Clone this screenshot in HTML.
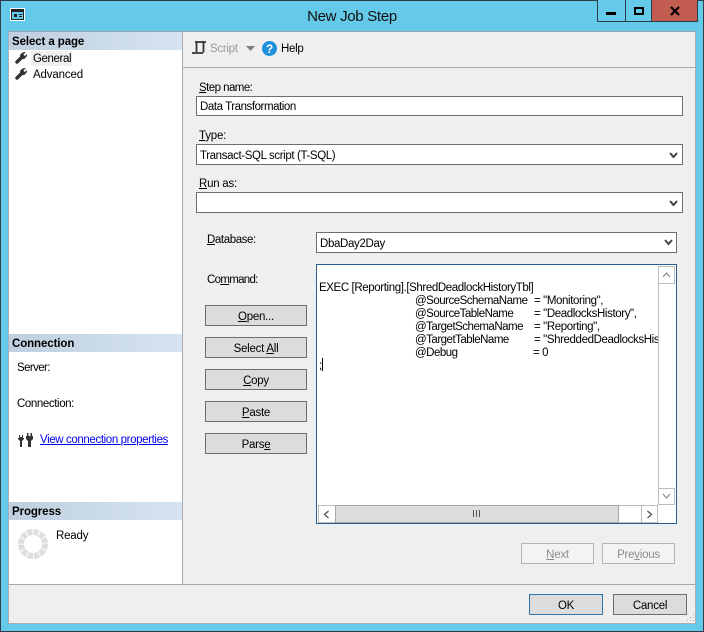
<!DOCTYPE html>
<html><head><meta charset="utf-8"><style>
html,body{margin:0;padding:0;width:704px;height:632px;overflow:hidden;background:#65c9ea}
*{box-sizing:border-box}
body{font-family:"Liberation Sans",sans-serif;font-size:11.5px;color:#000;position:relative}
.a{position:absolute}
.t{position:absolute;white-space:pre;line-height:14px;letter-spacing:-.4px}
.h{position:absolute;left:9px;width:173px;height:18px;background:linear-gradient(90deg,#bfcfdf,#d6e4f1);font-weight:bold;line-height:20px;padding-left:3px;font-size:11.5px;letter-spacing:-.1px}
.i{position:absolute;background:#fff;border:1px solid #6e6e6e;line-height:23px;padding-left:3px;white-space:pre;letter-spacing:-.38px}
.b{position:absolute;left:205px;width:102px;height:21px;background:#dcdcdc;border:1px solid #6e6e6e;text-align:center;line-height:23px;letter-spacing:-.25px}
.s{position:absolute;background:#fff;border:1px solid #bcbcbc}
.c{line-height:13px;letter-spacing:-.39px}
.n{letter-spacing:-.5px}
u{text-decoration-thickness:1px;text-underline-offset:1px}
</style></head><body>
<div class="a" style="left:0;top:0;width:704px;height:632px;border:1px solid #2d3e4a"></div>
<svg class="a" style="left:10px;top:8px" width="16" height="14" viewBox="0 0 16 14"><rect x=".5" y=".5" width="14" height="12" fill="#fff" stroke="#fff"/><rect x="1.500" y="1.500" width="12" height="10" fill="#65c9ea" stroke="#222"/><rect x="2" y="2" width="11" height="2" fill="#222"/><rect x="4" y="6" width="3" height="3" fill="#222"/><rect x="9" y="6" width="3" height="1" fill="#222"/><rect x="9" y="8" width="3" height="1" fill="#222"/></svg>
<div class="t" style="left:0;width:704px;top:8px;text-align:center;font-size:15px;line-height:18px;color:#111;letter-spacing:-.3px">New Job Step</div>
<div class="a" style="left:597px;top:0;width:29px;height:22px;border:1px solid #2d3e4a;border-top:0;background:#65c9ea"></div>
<div class="a" style="left:625px;top:0;width:27px;height:22px;border:1px solid #2d3e4a;border-top:0;background:#65c9ea"></div>
<div class="a" style="left:651px;top:0;width:47px;height:22px;border:1px solid #2d3e4a;border-top:0;background:#c25b50"></div>
<div class="a" style="left:606px;top:12px;width:10px;height:3px;background:#000"></div>
<div class="a" style="left:634px;top:7px;width:10px;height:8px;border:2px solid #000"></div>
<svg class="a" style="left:670px;top:6px" width="10" height="10" viewBox="0 0 10 10"><path d="M1 1L9 9M9 1L1 9" stroke="#000" stroke-width="2.200"/></svg>

<div class="a" style="left:8px;top:31px;width:688px;height:593px;background:#efefef;border:1px solid #a8b0b6;border-top:1px solid #8fa6b2"></div>
<div class="a" style="left:9px;top:32px;width:173px;height:552px;background:#fff"></div>
<div class="a" style="left:182px;top:32px;width:1px;height:552px;background:#a9a9a9"></div>
<div class="a" style="left:183px;top:67px;width:512px;height:1px;background:#a9a9a9"></div>
<div class="a" style="left:9px;top:584px;width:686px;height:1px;background:#a9a9a9"></div>
<div class="a" style="left:695px;top:67px;width:1px;height:517px;background:#a9a9a9"></div>

<div class="h" style="top:32px">Select a page</div>
<svg class="a" style="left:15px;top:52px" width="12" height="12" viewBox="0 0 12 12"><path d="M2 10L7 5" stroke="#333" stroke-width="3.500" stroke-linecap="round"/><path d="M5 4C5 2 7 0 11 0L8.500 2.500L9.500 4L12 2C12 5 10 7.500 7 7Z" fill="#333"/></svg>
<svg class="a" style="left:15px;top:68px" width="12" height="12" viewBox="0 0 12 12"><path d="M2 10L7 5" stroke="#333" stroke-width="3.500" stroke-linecap="round"/><path d="M5 4C5 2 7 0 11 0L8.500 2.500L9.500 4L12 2C12 5 10 7.500 7 7Z" fill="#333"/></svg>
<div class="a" style="left:31px;top:51px;width:41px;height:15px;background:#efefef"></div>
<div class="t" style="left:33px;top:52px">General</div>
<div class="t" style="left:33px;top:68px;letter-spacing:-.15px">Advanced</div>

<div class="h" style="top:334px">Connection</div>
<div class="t" style="left:17px;top:361px;letter-spacing:-.6px">Server:</div>
<div class="t" style="left:17px;top:397px;letter-spacing:-.4px">Connection:</div>
<svg class="a" style="left:18px;top:433px" width="15" height="14" viewBox="0 0 15 14"><path d="M1 2V5H0V6L2 8V14H4V8L6 6V5H5V2H4V4H2V2Z" fill="#333"/><path d="M8 3H15V6L13 8V14H10V8L8 6ZM9 0H10.500V3H9ZM12.500 0H14V3H12.500Z" fill="#333"/></svg>
<div class="t" style="left:40px;top:433px;color:#0000ee;text-decoration:underline;letter-spacing:-.38px">View connection properties</div>

<div class="h" style="top:502px">Progress</div>
<svg class="a" style="left:18px;top:529px" width="30" height="30" viewBox="0 0 30 30"><circle cx="15" cy="15" r="12" fill="none" stroke="#dedede" stroke-width="6" stroke-dasharray="5.280 1"/></svg>
<div class="t" style="left:56px;top:529px;letter-spacing:-.2px">Ready</div>

<svg class="a" style="left:191px;top:40px" width="16" height="15" viewBox="0 0 16 15"><path d="M4 2H15M5.500 2V12M12.500 2V12.500M1 13H12" fill="none" stroke="#333" stroke-width="1.800"/></svg>
<div class="t" style="left:210px;top:42px;color:#9a9a9a;letter-spacing:-.3px">Script</div>
<svg class="a" style="left:246px;top:46px" width="9" height="5"><path d="M0 0H9L4.500 5Z" fill="#7c7c7c"/></svg>
<svg class="a" style="left:262px;top:41px" width="15" height="15" viewBox="0 0 15 15"><circle cx="7.500" cy="7.500" r="7.500" fill="#1e90dc"/><text x="7.500" y="12" text-anchor="middle" font-family="Liberation Sans" font-weight="bold" font-size="12" fill="#fff">?</text></svg>
<div class="t" style="left:281px;top:42px;letter-spacing:-.3px">Help</div>

<div class="t" style="left:199px;top:81px;letter-spacing:-.55px"><u>S</u>tep name:</div>
<div class="i" style="left:196px;top:96px;width:487px;height:20px;line-height:20px;letter-spacing:-.44px">Data Transformation</div>
<div class="t" style="left:199px;top:129px;letter-spacing:-.2px"><u>T</u>ype:</div>
<div class="i" style="left:196px;top:144px;width:487px;height:21px">Transact-SQL script (T-SQL)</div>
<div class="t" style="left:199px;top:177px;letter-spacing:-.25px"><u>R</u>un as:</div>
<div class="i" style="left:196px;top:192px;width:487px;height:21px"></div>
<div class="t" style="left:207px;top:233px;letter-spacing:-.4px"><u>D</u>atabase:</div>
<div class="i" style="left:316px;top:232px;width:361px;height:21px;padding-left:3px;letter-spacing:-.35px">DbaDay2Day</div>
<div class="t" style="left:207px;top:273px;letter-spacing:-.7px">Co<u>m</u>mand:</div>
<svg class="a" style="left:669px;top:152px" width="9" height="7"><path d="M1 1L4.500 5L8 1" fill="none" stroke="#444" stroke-width="2"/></svg>
<svg class="a" style="left:669px;top:200px" width="9" height="7"><path d="M1 1L4.500 5L8 1" fill="none" stroke="#444" stroke-width="2"/></svg>
<svg class="a" style="left:664px;top:239px" width="9" height="7"><path d="M1 1L4.500 5L8 1" fill="none" stroke="#444" stroke-width="2"/></svg>

<div class="b" style="top:305px"><u>O</u>pen...</div>
<div class="b" style="top:337px">Select <u>A</u>ll</div>
<div class="b" style="top:369px"><u>C</u>opy</div>
<div class="b" style="top:401px"><u>P</u>aste</div>
<div class="b" style="top:433px">Pars<u>e</u></div>

<div class="a" style="left:316px;top:264px;width:361px;height:260px;background:#fff;border:1px solid #27608f"></div>
<div class="a" style="left:319px;top:282px;width:339px;height:90px;overflow:hidden">
<div class="t c" style="left:0;top:0">EXEC [Reporting].[ShredDeadlockHistoryTbl]</div>
<div class="t c n" style="left:96px;top:13px">@SourceSchemaName</div><div class="t c" style="left:215px;top:13px">= "Monitoring",</div>
<div class="t c n" style="left:96px;top:26px">@SourceTableName</div><div class="t c" style="left:215px;top:26px">= "DeadlocksHistory",</div>
<div class="t c n" style="left:96px;top:39px">@TargetSchemaName</div><div class="t c" style="left:215px;top:39px">= "Reporting",</div>
<div class="t c n" style="left:96px;top:52px">@TargetTableName</div><div class="t c" style="left:215px;top:52px">= "ShreddedDeadlocksHistory"</div>
<div class="t c n" style="left:96px;top:65px">@Debug</div><div class="t c" style="left:214px;top:65px">= 0</div>
<div class="t c" style="left:0;top:78px">;</div>
<div class="a" style="left:3px;top:76px;width:1px;height:13px;background:#000"></div>
</div>

<div class="s" style="left:658px;top:266px;width:17px;height:239px;border-width:0 0 0 1px"></div>
<div class="s" style="left:658px;top:266px;width:17px;height:18px"></div>
<div class="s" style="left:658px;top:488px;width:17px;height:17px"></div>
<svg class="a" style="left:662px;top:272px" width="9" height="6"><path d="M1 5L4.500 1L8 5" fill="none" stroke="#888" stroke-width="1.200"/></svg>
<svg class="a" style="left:662px;top:493px" width="9" height="6"><path d="M1 1L4.500 5L8 1" fill="none" stroke="#888" stroke-width="1.200"/></svg>
<div class="s" style="left:318px;top:505px;width:340px;height:18px"></div>
<div class="s" style="left:318px;top:505px;width:18px;height:18px"></div>
<div class="a" style="left:335px;top:505px;width:284px;height:18px;background:#dcdcdc;border:1px solid #a8a8a8"></div>
<div class="s" style="left:641px;top:505px;width:17px;height:18px"></div>
<svg class="a" style="left:323px;top:510px" width="7" height="9"><path d="M5.500 1L1.500 4.500L5.500 8" fill="none" stroke="#555" stroke-width="1.300"/></svg>
<svg class="a" style="left:646px;top:510px" width="7" height="9"><path d="M1.500 1L5.500 4.500L1.500 8" fill="none" stroke="#555" stroke-width="1.300"/></svg>
<div class="a" style="left:473px;top:510px;width:8px;height:7px;background:repeating-linear-gradient(90deg,#555 0 1px,transparent 1px 3px)"></div>

<div class="b" style="left:521px;top:543px;width:73px;background:#f3f3f3;border-color:#b4b4b4;color:#8c8c8c"><u>N</u>ext</div>
<div class="b" style="left:602px;top:543px;width:73px;background:#f3f3f3;border-color:#b4b4b4;color:#8c8c8c">Pre<u>v</u>ious</div>
<div class="b" style="left:529px;top:594px;width:74px;border-color:#2a77b0">OK</div>
<div class="b" style="left:613px;top:594px;width:74px">Cancel</div>
<svg class="a" style="left:686px;top:613px" width="10" height="10"><path d="M7 1h1v1H7zM4 4h1v1H4zM7 4h1v1H7zM1 7h1v1H1zM4 7h1v1H4zM7 7h1v1H7z" fill="#a8a8a8"/></svg>
</body></html>
